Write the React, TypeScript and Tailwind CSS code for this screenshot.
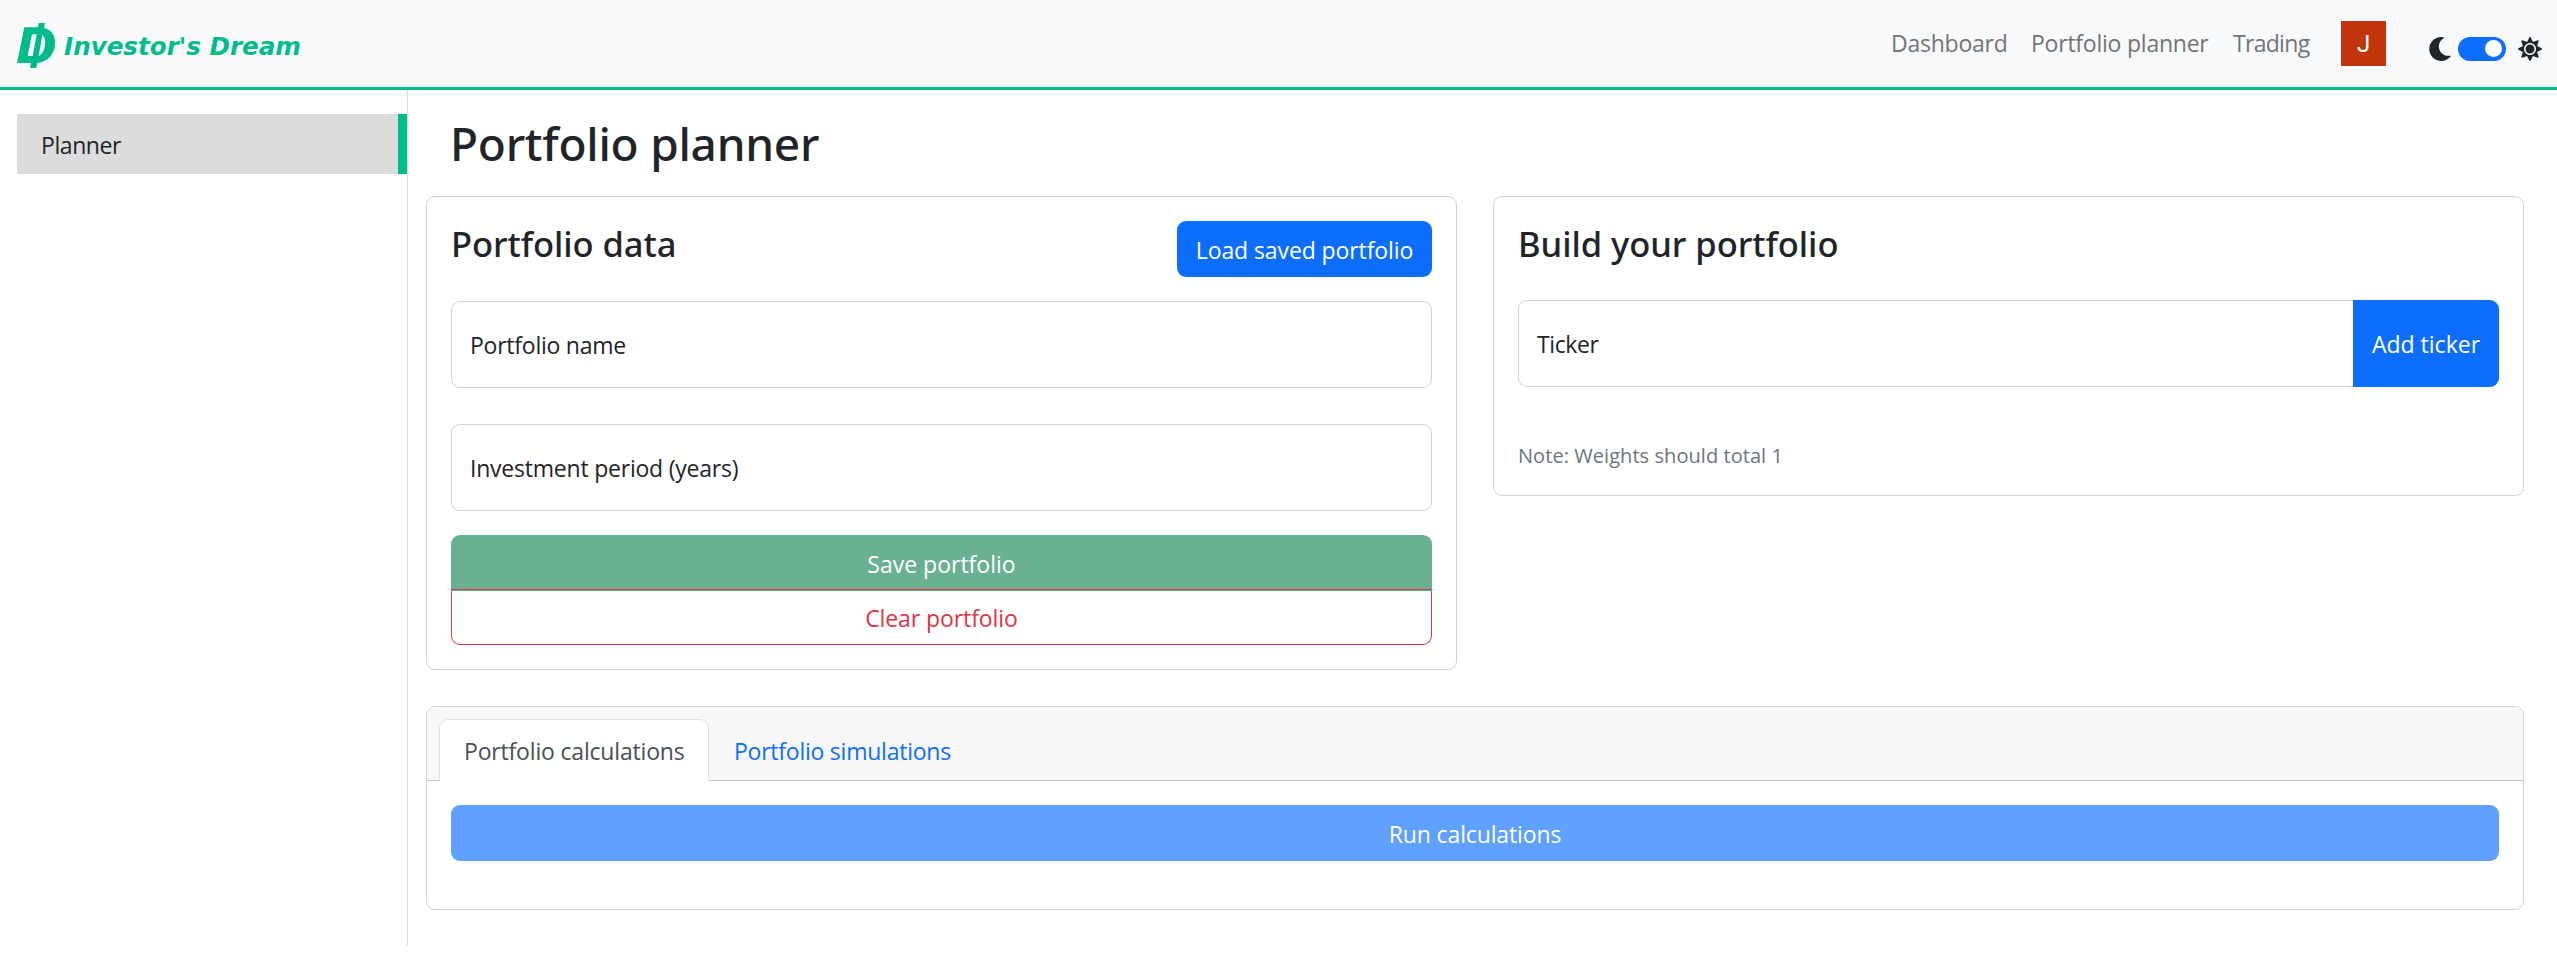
import type { ReactNode } from "react";
import { FaMoon, FaSun } from "react-icons/fa";

function Logo() {
  return (
    <svg viewBox="51 69 114 135" className="h-[45px] w-[38px]" fill="#00bc8c" fillRule="evenodd">
      <path d="M73 82H113L116 69H135L132 84C155 89 165 106 165 128C165 160 145 185 112 189L109 204H90L93 189H51ZM96 103L83 168H98L110 103ZM127 105L116 168C127 162 133 152 135 135C137 122 135 112 127 105Z" />
    </svg>
  );
}

function Navbar() {
  return (
    <header className="flex h-[90px] items-start border-b-[3px] border-[#00bc8c] bg-[#f8f9fb] pl-[17px] text-[#737475]">
      <div className="flex pt-[23px]">
        <Logo />
        <span className="ml-[9px] mt-[6px] font-['DejaVu_Sans',sans-serif] text-[24.6px] font-bold italic leading-[36px] text-[#00bc8c]">
          Investor's Dream
        </span>
      </div>
      <nav className="ml-auto flex pt-[25px] leading-[36px]">
        <a className="w-[140px] tracking-[-0.24px]">Dashboard</a>
        <a className="w-[202px] tracking-[-0.23px]">Portfolio planner</a>
        <a className="w-[108px] tracking-[-0.7px]">Trading</a>
      </nav>
      <div className="mt-[21px] flex h-[45px] w-[45px] items-center justify-center bg-[#c0350c] font-[Roboto,sans-serif] text-[24px] text-white">
        J
      </div>
      <div className="ml-[42px] mr-[15px] mt-[36px] flex items-center text-[24px] text-[#212529]">
        <FaMoon className="mt-px" />
        <span className="ml-[6px] mr-[12px] flex h-[24px] w-[48px] items-center justify-end rounded-full bg-[#0d6efd] pr-[4px]">
          <span className="h-[17px] w-[17px] rounded-full bg-white" />
        </span>
        <FaSun className="mt-px" />
      </div>
    </header>
  );
}

function Field({ children, className = "" }: { children: ReactNode; className?: string }) {
  return (
    <div className={`h-[87px] rounded-[9px] border border-[#ced4da] pl-[18px] pt-[25px] ${className}`}>
      {children}
    </div>
  );
}

function Card({ children, className = "" }: { children: ReactNode; className?: string }) {
  return <section className={`rounded-[9px] border border-[#d3d3d4] ${className}`}>{children}</section>;
}

export default function App() {
  return (
    <div className="h-[958px] overflow-hidden bg-white font-['Open_Sans','Noto_Sans',sans-serif] text-[23px] leading-[36px] text-[#212529]">
      <Navbar />
      <div className="flex">
        <aside className="h-[856px] w-[408px] shrink-0 border-r border-[#d9dbdd] pl-[17px] pt-[24px]">
          <div className="h-[60px] border-r-[9px] border-[#00bc8c] bg-[#dcdcdc] pl-[24px] pt-[13px] tracking-[-0.42px]">
            Planner
          </div>
        </aside>
        <main className="box-content w-[2098px] pl-[18px]">
          <div className="w-[2098px]">
            <h1 className="h-[106px] pl-[24px] pt-[24px] font-['Noto_Sans',sans-serif] text-[46px] font-medium leading-[58px] tracking-[-0.25px]">
              Portfolio planner
            </h1>
            <div className="flex items-start justify-between">
              <Card className="h-[474px] w-[1031px] px-[24px] pt-[24px]">
                <div className="flex h-[80px] justify-between">
                  <h3 className="pt-px font-['Noto_Sans',sans-serif] text-[34.5px] font-medium leading-[43px] tracking-[-0.05px]">
                    Portfolio data
                  </h3>
                  <button className="h-[56px] w-[255px] rounded-[9px] bg-[#0d6efd] pt-[2px] tracking-[-0.1px] text-white">
                    Load saved portfolio
                  </button>
                </div>
                <Field className="tracking-[-0.24px]">Portfolio name</Field>
                <Field className="mt-[36px] tracking-[-0.22px]">Investment period (years)</Field>
                <button className="mt-[24px] block h-[54px] w-full rounded-t-[9px] bg-[#6ab191] pt-[4px] text-white">
                  Save portfolio
                </button>
                <div className="h-[2px] border-t border-[#dc3545] bg-[#6ab191]" />
                <button className="block h-[54px] w-full rounded-b-[9px] border border-t-0 border-[#dc3545] tracking-[-0.08px] text-[#dc3545]">
                  Clear portfolio
                </button>
              </Card>
              <Card className="h-[300px] w-[1031px] px-[24px] pt-[24px]">
                <h3 className="h-[79px] pt-px font-['Noto_Sans',sans-serif] text-[34.5px] font-medium leading-[43px] tracking-[-0.03px]">
                  Build your portfolio
                </h3>
                <div className="flex">
                  <Field className="flex-1 rounded-r-none border-r-0 tracking-[-0.4px]">Ticker</Field>
                  <button className="h-[87px] w-[146px] rounded-r-[9px] bg-[#0d6efd] text-white">Add ticker</button>
                </div>
                <p className="pt-[51px] text-[20px] tracking-[0.06px] text-[#6c757d]">
                  Note: Weights should total 1
                </p>
              </Card>
            </div>
            <Card className="mt-[36px] h-[204px] overflow-hidden">
              <div className="flex h-[74px] border-b border-[#c9c9ca] bg-[#f7f7f7] pl-[12px] pt-[12px]">
                <div className="h-[62px] w-[270px] rounded-t-[9px] border border-b-0 border-[#dee2e6] bg-white pl-[24px] pt-[13px] tracking-[-0.18px] text-[#495057]">
                  Portfolio calculations
                </div>
                <div className="pl-[25px] pt-[14px] tracking-[-0.24px] text-[#0d6efd]">Portfolio simulations</div>
              </div>
              <div className="px-[24px] pt-[24px]">
                <button className="h-[56px] w-full rounded-[9px] bg-[#60a0fe] pt-[2px] tracking-[-0.13px] text-white">
                  Run calculations
                </button>
              </div>
            </Card>
          </div>
        </main>
      </div>
    </div>
  );
}
